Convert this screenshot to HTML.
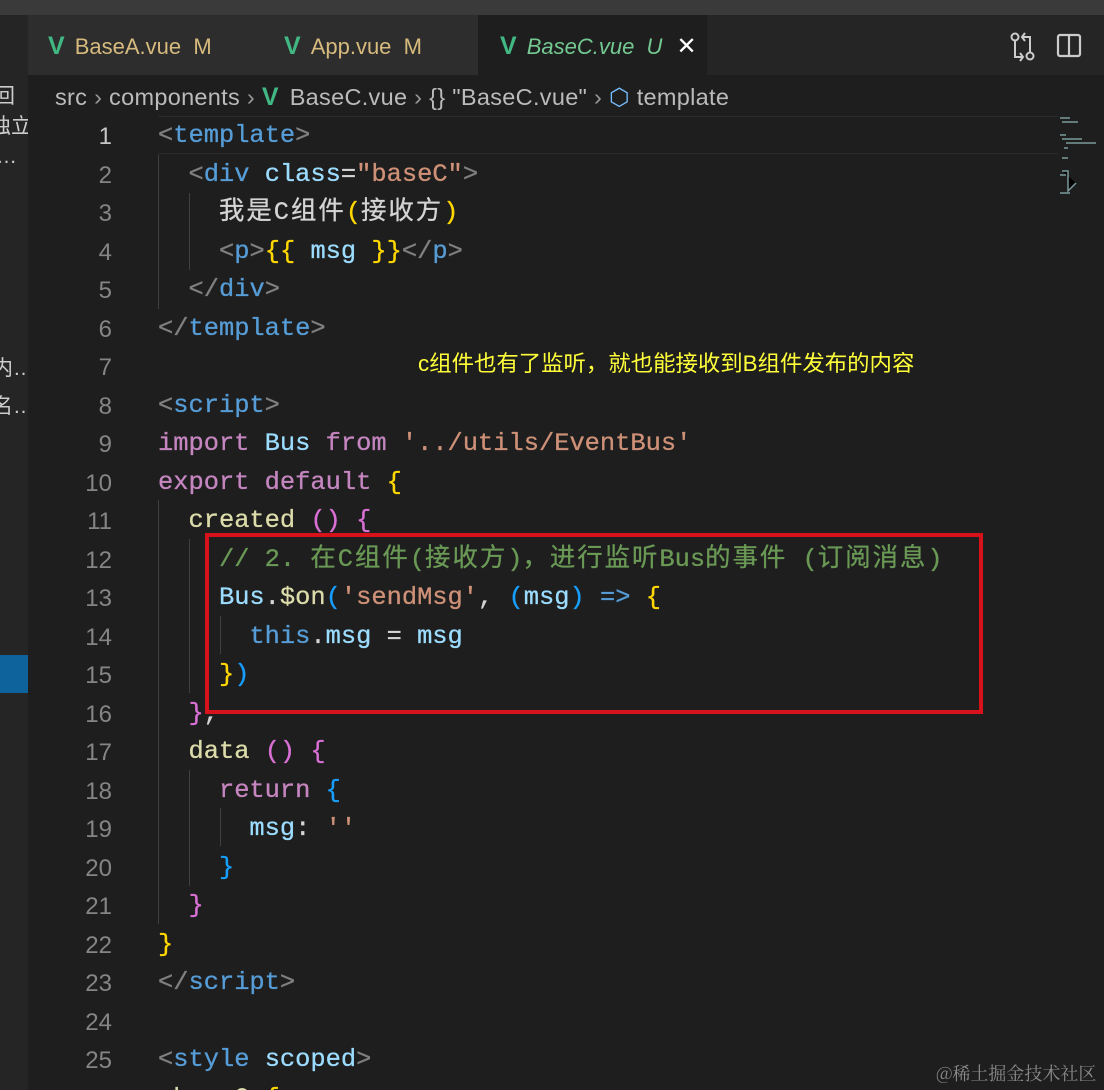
<!DOCTYPE html>
<html style="overflow:hidden"><head><meta charset="utf-8"><style>
*{margin:0;padding:0;box-sizing:border-box}
html,body{width:1104px;height:1090px;overflow:hidden}
body{background:#1e1e1e;position:relative;font-family:"Liberation Sans","Noto Sans CJK SC",sans-serif}
.abs{position:absolute}
.ln{position:absolute;left:40px;width:72px;text-align:right;font-family:"Liberation Sans",sans-serif;font-size:24px;color:#858585;height:38.5px;line-height:38.5px;margin-top:2px}
.cl{position:absolute;left:158px;white-space:pre;font-family:"Liberation Mono","Noto Sans CJK SC",monospace;font-size:25.4px;height:38.5px;line-height:38.5px;color:#d4d4d4;margin-top:1px;-webkit-text-stroke:0.3px}
.g{color:#808080}.t{color:#569cd6}.a{color:#9cdcfe}.s{color:#ce9178}.k{color:#c586c0}.f{color:#dcdcaa}.c{color:#6a9955}.y{color:#ffd700}.p{color:#da70d6}.b{color:#179fff}.w{color:#d4d4d4}
.cj{letter-spacing:2px}
.gd{position:absolute;width:1px;background:#404040}
.tab{position:absolute;top:15px;height:60px;line-height:62px;font-size:22px}
.v{color:#41b883;font-weight:bold;font-size:25px;margin-right:10px;font-family:"Liberation Sans",sans-serif}
</style></head><body>
<div class="abs" style="left:0;top:0;width:1104px;height:15px;background:#3a3a3a"></div>
<div class="abs" style="left:0;top:15px;width:1104px;height:60px;background:#252526"></div>
<div class="abs" style="left:28px;top:15px;width:450px;height:60px;background:#2d2d2d"></div>
<div class="abs" style="left:478px;top:15px;width:229px;height:60px;background:#1e1e1e"></div>
<div class="abs" style="left:0;top:75px;width:28px;height:1015px;background:#252526"></div>
<div class="abs" style="left:0;top:655px;width:28px;height:38px;background:#0e639c"></div>
<div class="abs" style="left:0;top:82px;font-size:21px;color:#ccc;width:28px;overflow:hidden;white-space:nowrap;line-height:30px">
<div style="margin-left:-6px">回</div><div style="margin-left:-10px">独立</div><div style="margin-left:-4px;height:28px">…</div>
</div>
<div class="abs" style="left:-8px;top:350px;font-size:21px;color:#ccc;white-space:nowrap;line-height:38px;width:36px;overflow:hidden"><div>内…</div><div>名…</div></div>

<div class="tab" style="left:48px;color:#d7ba7d"><span class="v">V</span>BaseA.vue&nbsp;&nbsp;M</div>
<div class="tab" style="left:284px;color:#d7ba7d"><span class="v">V</span>App.vue&nbsp;&nbsp;M</div>
<div class="tab" style="left:500px;color:#73c991;font-style:italic"><span class="v" style="font-style:normal">V</span>BaseC.vue&nbsp;&nbsp;U <span style="font-style:normal;color:#fff;margin-left:8px;font-size:24px">✕</span></div>
<svg class="abs" style="left:1010px;top:32px" width="28" height="30" viewBox="0 0 28 30" fill="none" stroke="#ccc" stroke-width="2"><circle cx="5" cy="5" r="3.5"/><circle cx="20" cy="24" r="3.5"/><path d="M5 9v16h8M10 21l3 4-3 4M20 20V5h-8M15 1l-3 4 3 4"/></svg>
<svg class="abs" style="left:1056px;top:33px" width="28" height="26" viewBox="0 0 28 26" fill="none" stroke="#ccc" stroke-width="2.2"><rect x="2" y="2" width="22" height="21" rx="2"/><path d="M13 2v21"/></svg>

<div class="abs" style="left:55px;top:83px;font-size:23.5px;color:#bbb;white-space:nowrap;line-height:28px;letter-spacing:0.3px">src <span style="color:#999">›</span> components <span style="color:#999">›</span> <span class="v" style="margin-right:4px">V</span> BaseC.vue <span style="color:#999">›</span> {} "BaseC.vue" <span style="color:#999">›</span> <span style="color:#75beff">⬡</span> template</div>

<div class="abs" style="left:158px;top:116px;width:900px;height:38px;border-top:1px solid #2a2a2a;border-bottom:1px solid #2a2a2a"></div>
<svg class="abs" style="left:1058px;top:113px" width="40" height="85"><g stroke="#7a9a9a" stroke-width="1.5"><path d="M2 5h10M4 9h16M2 22h6M4 26h20M8 30h30M6 35h4M4 45h6M2 62h6M4 58h6v20l8-8M2 80h10"/></g></svg>

<div class="gd" style="left:158px;top:155px;height:154px"></div>
<div class="gd" style="left:189px;top:193px;height:77px"></div>
<div class="gd" style="left:158px;top:500px;height:424px"></div>
<div class="gd" style="left:189px;top:539px;height:154px"></div>
<div class="gd" style="left:220px;top:616px;height:38px"></div>
<div class="gd" style="left:189px;top:770px;height:116px"></div>
<div class="gd" style="left:220px;top:808px;height:38px"></div>

<div class="ln" style="top:116px;color:#c6c6c6">1</div>
<div class="ln" style="top:154.5px">2</div>
<div class="ln" style="top:193px">3</div>
<div class="ln" style="top:231.5px">4</div>
<div class="ln" style="top:270px">5</div>
<div class="ln" style="top:308.5px">6</div>
<div class="ln" style="top:347px">7</div>
<div class="ln" style="top:385.5px">8</div>
<div class="ln" style="top:424px">9</div>
<div class="ln" style="top:462.5px">10</div>
<div class="ln" style="top:501px">11</div>
<div class="ln" style="top:539.5px">12</div>
<div class="ln" style="top:578px">13</div>
<div class="ln" style="top:616.5px">14</div>
<div class="ln" style="top:655px">15</div>
<div class="ln" style="top:693.5px">16</div>
<div class="ln" style="top:732px">17</div>
<div class="ln" style="top:770.5px">18</div>
<div class="ln" style="top:809px">19</div>
<div class="ln" style="top:847.5px">20</div>
<div class="ln" style="top:886px">21</div>
<div class="ln" style="top:924.5px">22</div>
<div class="ln" style="top:963px">23</div>
<div class="ln" style="top:1001.5px">24</div>
<div class="ln" style="top:1040px">25</div>
<div class="ln" style="top:1078.5px">26</div>

<div class="cl" style="top:116px"><span class="g">&lt;</span><span class="t">template</span><span class="g">&gt;</span></div>
<div class="cl" style="top:154.5px">  <span class="g">&lt;</span><span class="t">div</span> <span class="a">class</span><span class="w">=</span><span class="s">"baseC"</span><span class="g">&gt;</span></div>
<div class="cl" style="top:193px">    <span class="cj">我是C组件</span><span class="y">(</span><span class="cj">接收方</span><span class="y">)</span></div>
<div class="cl" style="top:231.5px">    <span class="g">&lt;</span><span class="t">p</span><span class="g">&gt;</span><span class="y">{{</span> <span class="a">msg</span> <span class="y">}}</span><span class="g">&lt;/</span><span class="t">p</span><span class="g">&gt;</span></div>
<div class="cl" style="top:270px">  <span class="g">&lt;/</span><span class="t">div</span><span class="g">&gt;</span></div>
<div class="cl" style="top:308.5px"><span class="g">&lt;/</span><span class="t">template</span><span class="g">&gt;</span></div>
<div class="cl" style="top:385.5px"><span class="g">&lt;</span><span class="t">script</span><span class="g">&gt;</span></div>
<div class="cl" style="top:424px"><span class="k">import</span> <span class="a">Bus</span> <span class="k">from</span> <span class="s">'../utils/EventBus'</span></div>
<div class="cl" style="top:462.5px"><span class="k">export</span> <span class="k">default</span> <span class="y">{</span></div>
<div class="cl" style="top:501px">  <span class="f">created</span> <span class="p">()</span> <span class="p">{</span></div>
<div class="cl" style="top:539.5px">    <span class="c">// 2. <span class="cj">在C组件</span>(<span class="cj">接收方</span>)<span class="cj">，进行监听</span>Bus<span class="cj">的事件</span> (<span class="cj">订阅消息</span>)</span></div>
<div class="cl" style="top:578px">    <span class="a">Bus</span>.<span class="f">$on</span><span class="b">(</span><span class="s">'sendMsg'</span>, <span class="b">(</span><span class="a">msg</span><span class="b">)</span> <span class="t">=&gt;</span> <span class="y">{</span></div>
<div class="cl" style="top:616.5px">      <span class="t">this</span>.<span class="a">msg</span> = <span class="a">msg</span></div>
<div class="cl" style="top:655px">    <span class="y">}</span><span class="b">)</span></div>
<div class="cl" style="top:693.5px">  <span class="p">}</span>,</div>
<div class="cl" style="top:732px">  <span class="f">data</span> <span class="p">()</span> <span class="p">{</span></div>
<div class="cl" style="top:770.5px">    <span class="k">return</span> <span class="b">{</span></div>
<div class="cl" style="top:809px">      <span class="a">msg</span>: <span class="s">''</span></div>
<div class="cl" style="top:847.5px">    <span class="b">}</span></div>
<div class="cl" style="top:886px">  <span class="p">}</span></div>
<div class="cl" style="top:924.5px"><span class="y">}</span></div>
<div class="cl" style="top:963px"><span class="g">&lt;/</span><span class="t">script</span><span class="g">&gt;</span></div>
<div class="cl" style="top:1040px"><span class="g">&lt;</span><span class="t">style</span> <span class="a">scoped</span><span class="g">&gt;</span></div>
<div class="cl" style="top:1078.5px"><span class="f">.baseC</span> <span class="y">{</span></div>

<div class="abs" style="left:205px;top:533px;width:778px;height:181px;border:4px solid #d8121b"></div>

<div class="abs" style="left:418px;top:346px;font-size:22.4px;color:#ffff3a;white-space:nowrap">c组件也有了监听，就也能接收到B组件发布的内容</div>
<div class="abs" style="left:936px;top:1060px;font-size:18px;color:#8a8a8a;white-space:nowrap;font-family:'Noto Serif CJK SC',serif">@稀土掘金技术社区</div>
</body></html>
